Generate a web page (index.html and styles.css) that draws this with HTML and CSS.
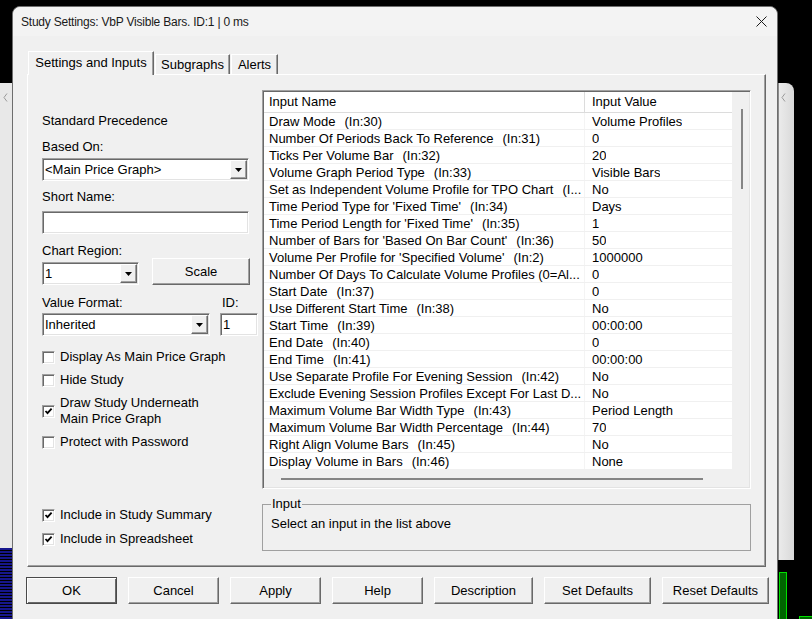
FILE: index.html
```html
<!DOCTYPE html>
<html lang="en">
<head>
  <meta charset="UTF-8">
  <meta name="viewport" content="width=device-width, initial-scale=1.0">
  <title>Study Settings</title>
  <link rel="stylesheet" href="styles.css">
</head>
<body>
  <!-- other windows on the desktop, behind the dialog -->
  <div class="back-window back-left">
    <svg class="back-chevron" width="5" height="9" viewBox="0 0 5 9"><polyline points="4,0.5 1,4.5 4,8.5" fill="none" stroke="#9a9a9a" stroke-width="1"/></svg>
  </div>
  <div class="back-stripes"></div>
  <div class="back-window back-right">
    <svg class="back-chevron" width="5" height="9" viewBox="0 0 5 9"><polyline points="4,0.5 1,4.5 4,8.5" fill="none" stroke="#9a9a9a" stroke-width="1"/></svg>
  </div>
  <div class="chart-bar chart-bar-a"></div>
  <div class="chart-bar chart-bar-b"></div>

  <div class="dialog">
    <div class="titlebar">
      <span class="title">Study Settings: VbP Visible Bars. ID:1 | 0 ms</span>
      <svg class="close" width="11" height="11" viewBox="0 0 11 11">
        <line x1="0.5" y1="0.5" x2="10.5" y2="10.5" stroke="#1a1a1a" stroke-width="1"/>
        <line x1="10.5" y1="0.5" x2="0.5" y2="10.5" stroke="#1a1a1a" stroke-width="1"/>
      </svg>
    </div>

    <div class="dialog-body">
      <div class="tabs">
        <div class="tab tab-active tab-settings">Settings and Inputs</div>
        <div class="tab tab-subgraphs">Subgraphs</div>
        <div class="tab tab-alerts">Alerts</div>
      </div>

      <div class="tab-panel">
        <div class="left-col">
          <div class="label precedence">Standard Precedence</div>

          <div class="label based-label">Based On:</div>
          <div class="combo combo-based">
            <span class="combo-text">&lt;Main Price Graph&gt;</span>
            <span class="combo-btn"><svg width="7" height="4" viewBox="0 0 7 4"><polygon points="0,0 7,0 3.5,4" fill="#000"/></svg></span>
          </div>

          <div class="label short-label">Short Name:</div>
          <div class="textbox textbox-short"></div>

          <div class="label region-label">Chart Region:</div>
          <div class="region-row">
            <div class="combo combo-region">
              <span class="combo-text">1</span>
              <span class="combo-btn"><svg width="7" height="4" viewBox="0 0 7 4"><polygon points="0,0 7,0 3.5,4" fill="#000"/></svg></span>
            </div>
            <div class="btn btn-scale">Scale</div>
          </div>

          <div class="format-labels">
            <span class="label">Value Format:</span>
            <span class="label id-label">ID:</span>
          </div>
          <div class="format-row">
            <div class="combo combo-format">
              <span class="combo-text">Inherited</span>
              <span class="combo-btn"><svg width="7" height="4" viewBox="0 0 7 4"><polygon points="0,0 7,0 3.5,4" fill="#000"/></svg></span>
            </div>
            <div class="textbox textbox-id">1</div>
          </div>

          <div class="checks">
            <div class="check-row"><span class="checkbox"></span><span class="label">Display As Main Price Graph</span></div>
            <div class="check-row"><span class="checkbox"></span><span class="label">Hide Study</span></div>
            <div class="check-row"><span class="checkbox"><svg width="9" height="9" viewBox="0 0 9 9"><polyline points="1.5,4 3.5,6.2 7.6,1.6" fill="none" stroke="#000" stroke-width="1.8"/></svg></span><span class="label">Draw Study Underneath<br>Main Price Graph</span></div>
            <div class="check-row"><span class="checkbox"></span><span class="label">Protect with Password</span></div>
          </div>

          <div class="checks checks-include">
            <div class="check-row"><span class="checkbox"><svg width="9" height="9" viewBox="0 0 9 9"><polyline points="1.5,4 3.5,6.2 7.6,1.6" fill="none" stroke="#000" stroke-width="1.8"/></svg></span><span class="label">Include in Study Summary</span></div>
            <div class="check-row"><span class="checkbox"><svg width="9" height="9" viewBox="0 0 9 9"><polyline points="1.5,4 3.5,6.2 7.6,1.6" fill="none" stroke="#000" stroke-width="1.8"/></svg></span><span class="label">Include in Spreadsheet</span></div>
          </div>
        </div>

        <div class="right-col">
          <div class="listview">
            <div class="list-body">
              <div class="list-header">
                <div class="head-name">Input Name</div>
                <div class="head-value">Input Value</div>
              </div>
              <div class="row"><div class="cell-name">Draw Mode<span class="tag">(In:30)</span></div><div class="cell-value">Volume Profiles</div></div>
              <div class="row"><div class="cell-name">Number Of Periods Back To Reference<span class="tag">(In:31)</span></div><div class="cell-value">0</div></div>
              <div class="row"><div class="cell-name">Ticks Per Volume Bar<span class="tag">(In:32)</span></div><div class="cell-value">20</div></div>
              <div class="row"><div class="cell-name">Volume Graph Period Type<span class="tag">(In:33)</span></div><div class="cell-value">Visible Bars</div></div>
              <div class="row"><div class="cell-name">Set as Independent Volume Profile for TPO Chart<span class="tag">(I...</span></div><div class="cell-value">No</div></div>
              <div class="row"><div class="cell-name">Time Period Type for 'Fixed Time'<span class="tag">(In:34)</span></div><div class="cell-value">Days</div></div>
              <div class="row"><div class="cell-name">Time Period Length for 'Fixed Time'<span class="tag">(In:35)</span></div><div class="cell-value">1</div></div>
              <div class="row"><div class="cell-name">Number of Bars for 'Based On Bar Count'<span class="tag">(In:36)</span></div><div class="cell-value">50</div></div>
              <div class="row"><div class="cell-name">Volume Per Profile for 'Specified Volume'<span class="tag">(In:2)</span></div><div class="cell-value">1000000</div></div>
              <div class="row"><div class="cell-name">Number Of Days To Calculate Volume Profiles (0=Al...</div><div class="cell-value">0</div></div>
              <div class="row"><div class="cell-name">Start Date<span class="tag">(In:37)</span></div><div class="cell-value">0</div></div>
              <div class="row"><div class="cell-name">Use Different Start Time<span class="tag">(In:38)</span></div><div class="cell-value">No</div></div>
              <div class="row"><div class="cell-name">Start Time<span class="tag">(In:39)</span></div><div class="cell-value">00:00:00</div></div>
              <div class="row"><div class="cell-name">End Date<span class="tag">(In:40)</span></div><div class="cell-value">0</div></div>
              <div class="row"><div class="cell-name">End Time<span class="tag">(In:41)</span></div><div class="cell-value">00:00:00</div></div>
              <div class="row"><div class="cell-name">Use Separate Profile For Evening Session<span class="tag">(In:42)</span></div><div class="cell-value">No</div></div>
              <div class="row"><div class="cell-name">Exclude Evening Session Profiles Except For Last D...</div><div class="cell-value">No</div></div>
              <div class="row"><div class="cell-name">Maximum Volume Bar Width Type<span class="tag">(In:43)</span></div><div class="cell-value">Period Length</div></div>
              <div class="row"><div class="cell-name">Maximum Volume Bar Width Percentage<span class="tag">(In:44)</span></div><div class="cell-value">70</div></div>
              <div class="row"><div class="cell-name">Right Align Volume Bars<span class="tag">(In:45)</span></div><div class="cell-value">No</div></div>
              <div class="row"><div class="cell-name">Display Volume in Bars<span class="tag">(In:46)</span></div><div class="cell-value">None</div></div>
            </div>
            <div class="vscroll"><div class="vthumb"></div></div>
            <div class="hscroll"><div class="hthumb"></div></div>
            <div class="scroll-corner"></div>
          </div>

          <fieldset class="group">
            <legend>Input</legend>
            <div class="group-text">Select an input in the list above</div>
          </fieldset>
        </div>
      </div>

      <div class="buttons">
        <div class="btn btn-default">OK</div>
        <div class="btn">Cancel</div>
        <div class="btn">Apply</div>
        <div class="btn">Help</div>
        <div class="btn btn-desc">Description</div>
        <div class="btn btn-wide">Set Defaults</div>
        <div class="btn btn-wide">Reset Defaults</div>
      </div>
    </div>
  </div>
</body>
</html>
```

FILE: styles.css
```css
body {
  margin: 0;
  width: 812px;
  height: 619px;
  overflow: hidden;
  position: relative;
  background-color: #000;
  font-family: "Liberation Sans", Arial, sans-serif;
  font-size: 13px;
  color: #000;
}

/* windows behind the dialog */
.back-window {
  position: absolute;
  top: 83px;
  height: 477px;
  background-color: #e8e8e8;
}

.back-left {
  left: 0;
  width: 12px;
  height: 465px;
}

.back-left .back-chevron {
  position: absolute;
  left: 3px;
  top: 10px;
}

.back-right {
  left: 778px;
  width: 15px;
  border-top-right-radius: 8px;
  border-left: 1px solid #8c8c8c;
  background: linear-gradient(to right, #ebebeb, #d9d9d9);
}

.back-right .back-chevron {
  position: absolute;
  left: 2px;
  top: 10px;
}

.back-stripes {
  position: absolute;
  left: 0;
  top: 548px;
  width: 12px;
  height: 71px;
  background: repeating-linear-gradient(to bottom, #16168c 0, #16168c 2px, #000 2px, #000 3px);
}

.chart-bar {
  position: absolute;
  background-color: #006400;
  border: 1px solid #00e000;
  border-bottom: none;
}

.chart-bar-a {
  left: 779px;
  top: 572px;
  width: 6px;
  height: 47px;
}

.chart-bar-b {
  left: 799px;
  top: 616px;
  width: 13px;
  height: 3px;
  border-right: none;
}

/* dialog */
.dialog {
  position: absolute;
  left: 12px;
  top: 6px;
  width: 766px;
  height: 630px;
  box-sizing: border-box;
  border: 1px solid #6e6e6e;
  border-radius: 8px 8px 0 0;
  background-color: #f0f0f0;
}

.titlebar {
  height: 29px;
  display: flex;
  align-items: center;
  justify-content: space-between;
  padding: 0 10px 0 8px;
  background-color: #f3f3f3;
  border-radius: 8px 8px 0 0;
}

.title {
  font-size: 12px;
  letter-spacing: -0.22px;
  color: #1a1a1a;
}

.dialog-body {
  padding: 15px 0 0 14px;
}

/* tabs */
.tabs {
  display: flex;
  align-items: flex-end;
  height: 23px;
}

.tab {
  box-sizing: border-box;
  height: 20px;
  margin-left: 1px;
  padding-top: 2px;
  line-height: 16px;
  text-align: center;
  border-top: 1px solid #fff;
  border-left: 1px solid #fff;
  border-right: 1px solid #696969;
  box-shadow: inset -1px 0 0 #a0a0a0;
}

.tab-active {
  position: relative;
  z-index: 1;
  height: 24px;
  margin-bottom: -1px;
  padding-top: 3px;
  background-color: #f0f0f0;
}

.tab-settings {
  width: 126px;
}

.tab-subgraphs {
  width: 75px;
}

.tab-alerts {
  width: 47px;
}

.tab-panel {
  width: 739px;
  height: 493px;
  box-sizing: border-box;
  display: flex;
  gap: 4px;
  padding: 15px 14px 0 14px;
  border: 1px solid;
  border-color: #fff #696969 #696969 #fff;
  box-shadow: inset -1px -1px 0 #a0a0a0;
}

/* left column */
.left-col {
  width: 216px;
  display: flex;
  flex-direction: column;
}

.label {
  line-height: 16px;
  white-space: nowrap;
}

.precedence {
  margin-top: 23px;
}

.based-label {
  margin-top: 10px;
}

.short-label {
  margin-top: 8px;
}

.region-label {
  margin-top: 9px;
}

.combo,
.textbox {
  height: 23px;
  box-sizing: border-box;
  display: flex;
  align-items: center;
  padding-left: 2px;
  background-color: #fff;
  border: 1px solid;
  border-color: #a0a0a0 #fff #fff #a0a0a0;
  box-shadow: inset 1px 1px 0 #696969, inset -1px -1px 0 #e3e3e3;
}

.combo {
  margin-top: 3px;
}

.combo-text {
  flex: 1;
  white-space: nowrap;
}

.combo-btn {
  width: 17px;
  height: 19px;
  margin-right: 1px;
  box-sizing: border-box;
  display: flex;
  align-items: center;
  justify-content: center;
  background-color: #f0f0f0;
  border: 1px solid;
  border-color: #fff #696969 #696969 #fff;
  box-shadow: inset -1px -1px 0 #a0a0a0;
}

.combo-based {
  width: 207px;
}

.textbox-short {
  width: 207px;
  margin-top: 6px;
}

.region-row {
  display: flex;
  align-items: flex-end;
  gap: 13px;
  margin-top: -1px;
}

.combo-region {
  width: 97px;
}

.format-labels {
  display: flex;
  justify-content: space-between;
  margin-top: 10px;
}

.id-label {
  width: 38px;
  padding-left: 2px;
  box-sizing: border-box;
}

.format-row {
  display: flex;
  gap: 10px;
  margin-top: 2px;
}

.format-row .combo {
  margin-top: 0;
}

.combo-format {
  width: 168px;
}

.textbox-id {
  width: 38px;
}

.checks {
  display: flex;
  flex-direction: column;
  gap: 7px;
  margin-top: 13px;
}

.checks-include {
  gap: 8px;
  margin-top: 57px;
}

.check-row {
  display: flex;
  align-items: center;
  gap: 5px;
}

.checkbox {
  width: 13px;
  height: 13px;
  box-sizing: border-box;
  display: flex;
  align-items: center;
  justify-content: center;
  background-color: #fff;
  border: 1px solid;
  border-color: #a0a0a0 #fff #fff #a0a0a0;
  box-shadow: inset 1px 1px 0 #696969, inset -1px -1px 0 #e3e3e3;
}

/* inputs list */
.right-col {
  width: 489px;
  display: flex;
  flex-direction: column;
}

.listview {
  height: 399px;
  box-sizing: border-box;
  display: grid;
  grid-template-columns: 1fr 17px;
  grid-template-rows: 1fr 17px;
  padding: 1px;
  background-color: #f0f0f0;
  border: 1px solid;
  border-color: #a0a0a0 #fff #fff #a0a0a0;
  box-shadow: inset 1px 1px 0 #696969, inset -1px -1px 0 #e3e3e3;
}

.list-body {
  background-color: #fff;
  overflow: hidden;
}

.list-header {
  display: flex;
  height: 21px;
  box-sizing: border-box;
  line-height: 20px;
  border-bottom: 1px solid #dcdcdc;
}

.head-name {
  width: 321px;
  box-sizing: border-box;
  padding-left: 5px;
  border-right: 1px solid #dcdcdc;
}

.head-value {
  padding-left: 7px;
}

.row {
  display: flex;
  height: 17px;
  box-sizing: border-box;
  border-bottom: 1px solid #f0f0f0;
}

.cell-name,
.cell-value {
  padding-top: 2px;
  line-height: 14px;
  white-space: nowrap;
  overflow: hidden;
}

.cell-name {
  width: 321px;
  flex-shrink: 0;
  box-sizing: border-box;
  padding-left: 5px;
  border-right: 1px solid #f4f4f4;
}

.cell-value {
  padding-left: 7px;
}

.tag {
  margin-left: 9px;
}

.vscroll,
.hscroll {
  position: relative;
  background-color: #f0f0f0;
}

.vthumb {
  position: absolute;
  left: 9px;
  top: 17px;
  width: 2px;
  height: 80px;
  background-color: #858585;
}

.hthumb {
  position: absolute;
  left: 17px;
  top: 8px;
  width: 422px;
  height: 2px;
  background-color: #858585;
}

.group {
  margin: 7px 0 0;
  padding: 4px 8px 18px;
  min-width: 0;
  border: 1px solid #a0a0a0;
}

.group legend {
  padding: 0 1px;
  line-height: 16px;
}

.group-text {
  line-height: 16px;
}

/* buttons */
.btn {
  width: 91px;
  height: 27px;
  box-sizing: border-box;
  line-height: 25px;
  text-align: center;
  white-space: nowrap;
  background-color: #f0f0f0;
  border: 1px solid;
  border-color: #fff #696969 #696969 #fff;
  box-shadow: inset -1px -1px 0 #a0a0a0;
}

.btn-scale {
  width: 98px;
}

.btn-default {
  border-color: #4a4a4a;
  box-shadow: inset 1px 1px 0 #fff, inset -1px -1px 0 #696969;
}

.btn-desc {
  width: 99px;
}

.btn-wide {
  width: 107px;
}

.buttons {
  display: flex;
  gap: 11px;
  margin: 10px 0 0 -1px;
}
```
